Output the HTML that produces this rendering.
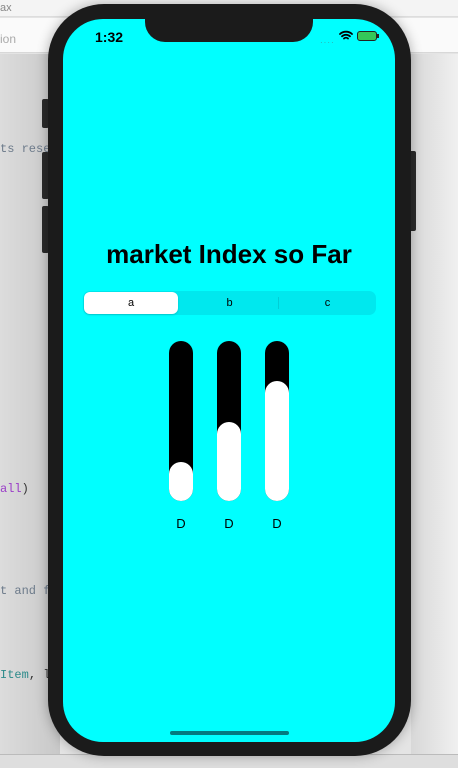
<!DOCTYPE html>
<html><head><style>
*{margin:0;padding:0;box-sizing:border-box}
body{width:458px;height:768px;overflow:hidden;position:relative;background:#e4e4e4;font-family:"Liberation Sans",sans-serif}
.abs{position:absolute}
.code{font-family:"Liberation Mono",monospace;font-size:12px;color:#6c7a8a;position:absolute}
</style></head><body>
<div class="abs" style="left:0;top:0;width:458px;height:17px;background:#f4f4f4;border-bottom:1px solid #ddd"></div>
<div class="abs" style="left:0;top:0;font-size:11px;color:#888;top:2px">ax</div>
<div class="abs" style="left:0;top:18px;width:458px;height:35px;background:#fafafa;border-bottom:1px solid #d8d8d8"></div>
<div class="abs" style="left:0;top:32px;font-size:12px;color:#aaa">ion</div>
<div class="abs" style="left:0;top:54px;width:60px;height:700px;background:linear-gradient(90deg,#dcdcdc,#c8c8c8)"></div>
<div class="abs" style="left:411px;top:54px;width:47px;height:700px;background:linear-gradient(90deg,#d8d8d8,#f0f0f0)"></div>
<div class="abs" style="left:0;top:754px;width:458px;height:14px;background:#dedede;border-top:1px solid #bbb"></div>
<div class="code" style="left:0;top:142px">ts rese</div>
<div class="code" style="left:0;top:482px"><span style="color:#9a3cc8">all</span><span style="color:#333">)</span></div>
<div class="code" style="left:0;top:584px">t and f</div>
<div class="code" style="left:0;top:668px"><span style="color:#2c8a8a">Item</span><span style="color:#333">, l</span></div>
<!-- side buttons -->
<div class="abs" style="left:42px;top:99px;width:7px;height:29px;background:#2a2a2a;border-radius:2px"></div>
<div class="abs" style="left:42px;top:152px;width:7px;height:47px;background:#2a2a2a;border-radius:2px"></div>
<div class="abs" style="left:42px;top:206px;width:7px;height:47px;background:#2a2a2a;border-radius:2px"></div>
<div class="abs" style="left:409px;top:151px;width:7px;height:80px;background:#2a2a2a;border-radius:2px"></div>
<!-- phone -->
<div class="abs" style="left:48px;top:4px;width:363px;height:752px;background:#1b1b1b;border-radius:56px;box-shadow:0 0 12px rgba(0,0,0,.3)"></div>
<div class="abs" style="left:63px;top:19px;width:332px;height:723px;background:#00ffff;border-radius:40px;overflow:hidden">
  <div class="abs" style="left:82px;top:-2px;width:168px;height:25px;background:#1b1b1b;border-radius:0 0 20px 20px"></div>
  <div class="abs" style="left:32px;top:10px;font-size:14px;font-weight:bold;color:#000">1:32</div>
  <div class="abs" style="left:257px;top:19px;font-size:8px;color:#55b;letter-spacing:1px;color:#3a9fa0">····</div>
  <svg class="abs" style="left:276px;top:11px" width="14" height="11" viewBox="0 0 14 11"><path d="M1 4a9 9 0 0 1 12 0M3 6.3a6 6 0 0 1 8 0M5 8.5a3 3 0 0 1 4 0" stroke="#000" stroke-width="1.8" fill="none" stroke-linecap="round"/></svg>
  <div class="abs" style="left:294px;top:12px;width:20px;height:10px;border:1.5px solid #222;border-radius:3px;background:#34c759"></div>
  <div class="abs" style="left:314px;top:15px;width:2px;height:4px;background:#222"></div>
  <div class="abs" style="left:0;top:220px;width:332px;text-align:center;font-size:26px;font-weight:bold;color:#000">market Index so Far</div>
  <div class="abs" style="left:20px;top:272px;width:293px;height:24px;background:#00e8ee;border-radius:7px"></div>
  <div class="abs" style="left:21px;top:273px;width:94px;height:22px;background:#fff;border-radius:6px;box-shadow:0 1px 2px rgba(0,0,0,.15)"></div>
  <div class="abs" style="left:215px;top:278px;width:1px;height:12px;background:#00cfd6"></div>
  <div class="abs" style="left:21px;top:278px;width:94px;text-align:center;font-size:11px">a</div>
  <div class="abs" style="left:118px;top:278px;width:97px;text-align:center;font-size:11px">b</div>
  <div class="abs" style="left:216px;top:278px;width:97px;text-align:center;font-size:11px">c</div>
  <div class="abs" style="left:106px;top:322px;width:24px;height:160px;background:#000;border-radius:12px;overflow:hidden"><div class="abs" style="left:0;top:121px;width:24px;height:39px;background:#fff;border-radius:12px 12px 0 0"></div></div>
  <div class="abs" style="left:154px;top:322px;width:24px;height:160px;background:#000;border-radius:12px;overflow:hidden"><div class="abs" style="left:0;top:81px;width:24px;height:79px;background:#fff;border-radius:12px 12px 0 0"></div></div>
  <div class="abs" style="left:202px;top:322px;width:24px;height:160px;background:#000;border-radius:12px;overflow:hidden"><div class="abs" style="left:0;top:40px;width:24px;height:120px;background:#fff;border-radius:12px 12px 0 0"></div></div>
  <div class="abs" style="left:106px;top:497px;width:24px;text-align:center;font-size:13px">D</div>
  <div class="abs" style="left:154px;top:497px;width:24px;text-align:center;font-size:13px">D</div>
  <div class="abs" style="left:202px;top:497px;width:24px;text-align:center;font-size:13px">D</div>
  <div class="abs" style="left:107px;top:712px;width:119px;height:4px;background:#047a80;border-radius:2px"></div>
</div>
</body></html>
